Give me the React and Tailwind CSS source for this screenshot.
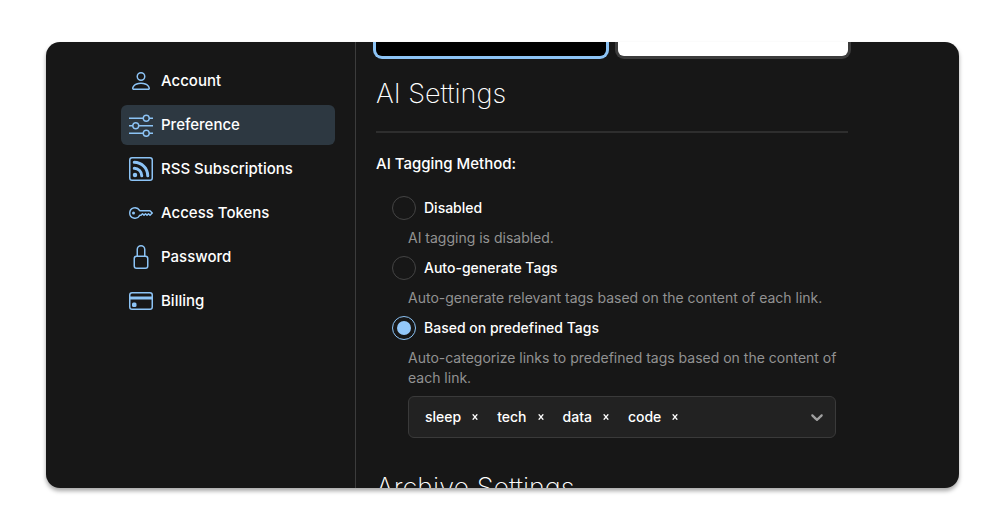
import React, { useState } from 'react';
import { BsPerson, BsSliders, BsRss, BsKey, BsLock, BsCreditCard } from 'react-icons/bs';

const navItems = [
    { label: 'Account', icon: BsPerson, href: '#account' },
    { label: 'Preference', icon: BsSliders, href: '#preference' },
    { label: 'RSS Subscriptions', icon: BsRss, href: '#rss-subscriptions' },
    { label: 'Access Tokens', icon: BsKey, href: '#access-tokens' },
    { label: 'Password', icon: BsLock, href: '#password' },
    { label: 'Billing', icon: BsCreditCard, href: '#billing' },
];

const taggingMethods = [
    { id: 'disabled', label: 'Disabled', description: 'AI tagging is disabled.' },
    {
        id: 'generate',
        label: 'Auto-generate Tags',
        description: 'Auto-generate relevant tags based on the content of each link.',
    },
    {
        id: 'predefined',
        label: 'Based on predefined Tags',
        description: 'Auto-categorize links to predefined tags based on the content of each link.',
    },
];

const Sidebar = ({ active }) => (
    <nav className="w-[310px] shrink-0 border-r border-[#3c3c3c] pt-[19px] pl-[75px] pr-5">
        <ul className="flex flex-col gap-1">
            {navItems.map(({ label, icon: Icon, href }) => (
                <li key={label}>
                    <a
                        href={href}
                        className={`flex h-10 items-center gap-2 rounded-md px-2 text-[15px] leading-6 font-medium text-white ${
                            label === active ? 'bg-[#2d3841]' : 'hover:bg-[#222]'
                        }`}
                    >
                        <Icon className="size-6 text-[#8cc3f5]" />
                        <span>{label}</span>
                    </a>
                </li>
            ))}
        </ul>
    </nav>
);

const TagSelect = ({ tags, onRemove }) => (
    <div className="flex h-[42px] items-center justify-between rounded-md border border-[#3a3a3a] bg-[#222] px-4 text-sm">
        <ul className="flex gap-4">
            {tags.map((tag) => (
                <li key={tag} className="flex items-center gap-2 font-medium text-white">
                    {tag}
                    <button
                        type="button"
                        aria-label={`Remove ${tag}`}
                        onClick={() => onRemove(tag)}
                        className="flex size-3 items-center justify-center"
                    >
                        <svg viewBox="0 0 6 6" className="size-[6px]" fill="none" stroke="currentColor" strokeWidth="1.3">
                            <path d="M.7.3 5.3 5.7M5.3.3.7 5.7" />
                        </svg>
                    </button>
                </li>
            ))}
        </ul>
        <button type="button" aria-label="Show tags" className="-mr-2 text-[#a0a0a0]">
            <svg viewBox="0 0 20 20" className="size-5" fill="currentColor">
                <path d="M4.516 7.548c0.436-0.446 1.043-0.481 1.576 0l3.908 3.747 3.908-3.747c0.533-0.481 1.141-0.446 1.574 0 0.436 0.445 0.408 1.197 0 1.615-0.406 0.418-4.695 4.502-4.695 4.502-0.217 0.223-0.502 0.335-0.787 0.335s-0.57-0.112-0.789-0.335c0 0-4.287-4.084-4.695-4.502s-0.436-1.17 0-1.615z" />
            </svg>
        </button>
    </div>
);

const App = () => {
    const [method, setMethod] = useState('predefined');
    const [tags, setTags] = useState(['sleep', 'tech', 'data', 'code']);

    const handleRemove = (tag) => {
        setTags(tags.filter((t) => t !== tag));
    };

    return (
        <div className="flex h-screen bg-white pt-[42px] pr-[47px] pb-[41px] pl-[46px] font-['Inter',sans-serif]">
            <div className="flex flex-1 overflow-hidden rounded-[14px] bg-[#171717] text-white shadow-[0_3px_4px_rgba(0,0,0,0.35)]">
                <Sidebar active="Preference" />

                <main className="max-w-[492px] flex-1 pl-5">
                    {/* Theme previews */}
                    <div className="grid grid-cols-2 gap-3">
                        <button type="button" aria-label="Dark theme" className="h-[14px] rounded-b-md bg-black ring-3 ring-[#8cc3f5]" />
                        <button type="button" aria-label="Light theme" className="h-[14px] rounded-b-md bg-white ring-3 ring-[#3c3c3c]" />
                    </div>

                    <h2 className="mt-5 text-[27px] leading-9 font-extralight">AI Settings</h2>
                    <hr className="mt-[19px] border-t-2 border-[#2e2e2e]" />

                    <fieldset className="mt-[19px]">
                        <legend className="mb-5 text-[15px] leading-6 font-medium">AI Tagging Method:</legend>
                        <div className="flex flex-col gap-2 pl-4">
                            {taggingMethods.map(({ id, label, description }) => (
                                <div key={id}>
                                    <label className="flex items-center gap-2 text-sm font-medium">
                                        <input
                                            type="radio"
                                            name="tagging"
                                            value={id}
                                            checked={method === id}
                                            onChange={() => setMethod(id)}
                                            className="size-6 appearance-none rounded-full border border-[#444] bg-clip-content p-1 checked:border-[#8cc3f5] checked:bg-[#93c8fa]"
                                        />
                                        {label}
                                    </label>
                                    <p className="mt-2 pl-4 text-sm text-[#929292]">{description}</p>
                                </div>
                            ))}
                            <div className="pr-3 pl-4">
                                {method === 'predefined' && <TagSelect tags={tags} onRemove={handleRemove} />}
                            </div>
                        </div>
                    </fieldset>

                    <h2 className="mt-8 text-[27px] leading-9 font-extralight">Archive Settings</h2>
                </main>
            </div>
        </div>
    );
};

export default App;
